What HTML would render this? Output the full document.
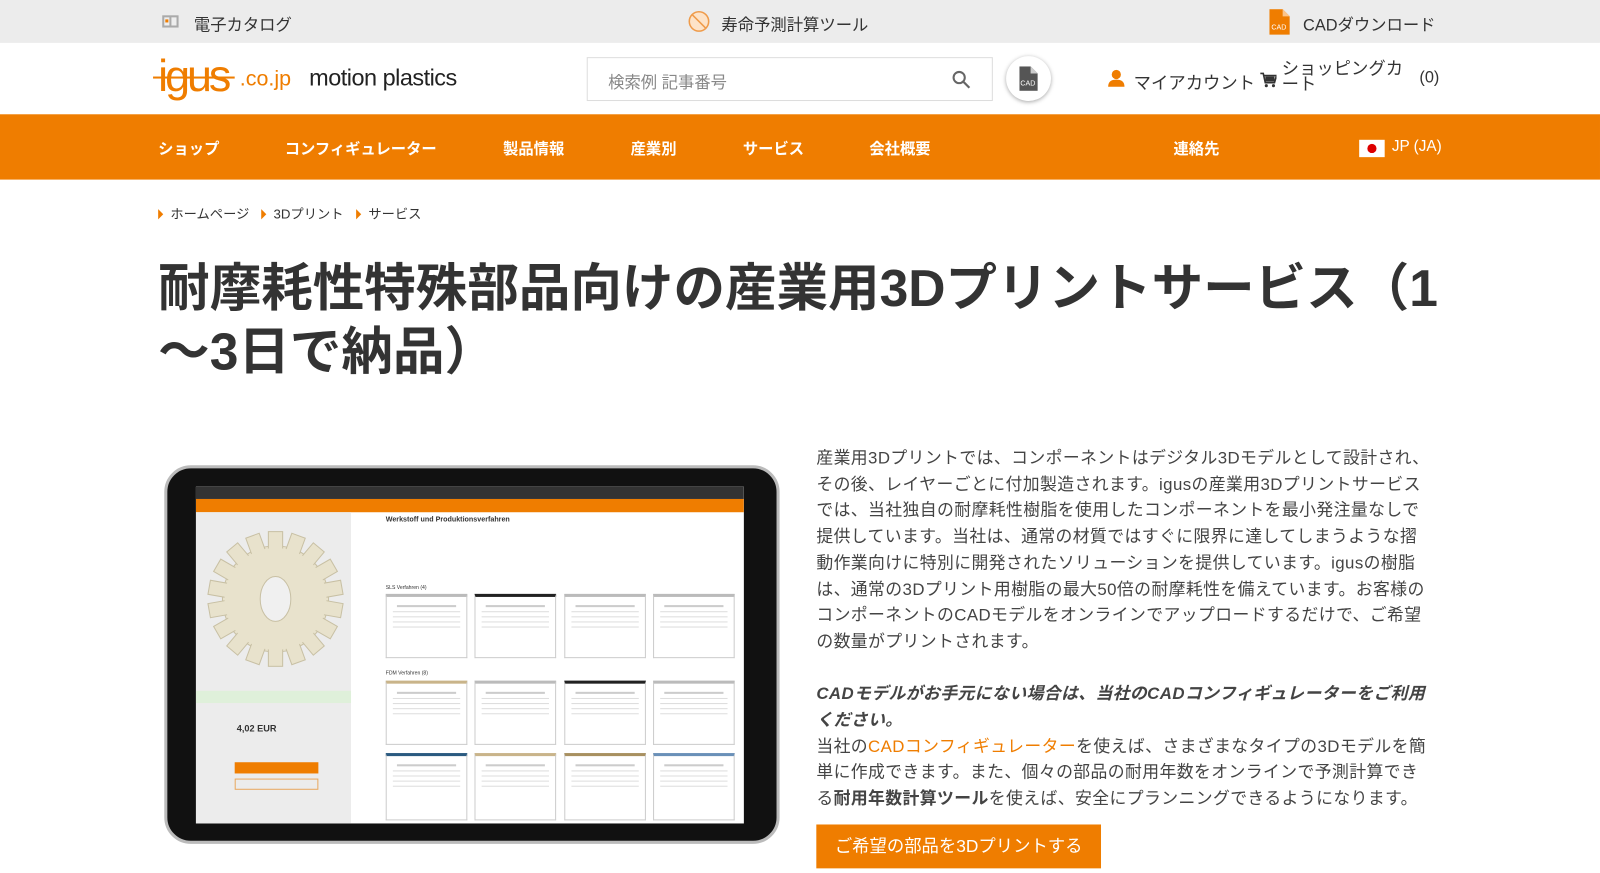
<!DOCTYPE html>
<html><head><meta charset="utf-8">
<style>
*{margin:0;padding:0;box-sizing:border-box}
body{width:1600px;height:873px;overflow:hidden;background:#fff;font-family:"Liberation Sans","Noto Sans CJK JP",sans-serif;color:#333}
#w{width:1568px;height:856px;position:relative;transform:scale(1.0204);transform-origin:0 0}
.top{height:42px;background:#ececec;position:relative;font-size:16px;color:#333}
.top span{position:absolute;top:11px}
.hdr{height:70px;position:relative}
.nav{height:64px;background:#ef7d00;position:relative;color:#fff;font-size:15px;font-weight:bold}
.nav span{position:absolute;top:23px}
.abs{position:absolute}
.bc{position:absolute;top:199px;font-size:13px;color:#333}
.bc i{display:inline-block;width:0;height:0;border-left:5px solid #ef7d00;border-top:5px solid transparent;border-bottom:5px solid transparent;margin-right:7px;vertical-align:-1px}
h1{position:absolute;left:155px;top:252px;width:1300px;font-size:50.5px;line-height:62px;font-weight:bold;color:#333;letter-spacing:0}
.txt{position:absolute;left:800px;top:437px;width:640px;font-size:16.5px;line-height:25.7px;color:#444;white-space:nowrap;letter-spacing:0.4px}
.btn{position:absolute;left:800px;top:808px;width:279px;height:43px;background:#ef7d00;color:#fff;font-size:17px;line-height:43px;text-align:center}
.card{position:absolute;background:#fff;border:1px solid #ccc;border-top:3px solid #bbb}
.card b{display:block;height:2px;background:#ccc;margin:8px 10px 4px}
.card u{display:block;height:1px;background:#ddd;margin:4px 6px;text-decoration:none}
</style></head><body><div id="w">
<div class="top">
 <svg class="abs" style="left:158px;top:13px" width="18" height="16"><rect x="1" y="2" width="16" height="12" fill="#aaa"/><rect x="3" y="4" width="5" height="8" fill="#eee"/><rect x="10" y="4" width="5" height="8" fill="#eee"/><rect x="4" y="6" width="3" height="3" fill="#ef7d00"/></svg>
 <span style="left:190px">電子カタログ</span>
 <svg class="abs" style="left:674px;top:10px" width="22" height="22"><circle cx="11" cy="11" r="9.5" fill="#fde3c8" stroke="#ef9b4a" stroke-width="1.5"/><line x1="4" y1="4" x2="18" y2="18" stroke="#ef9b4a" stroke-width="1.5"/></svg>
 <span style="left:707px">寿命予測計算ツール</span>
 <svg class="abs" style="left:1244px;top:9px" width="20" height="25"><path d="M0 0h13l7 7v18H0z" fill="#ef7d00"/><path d="M13 0v7h7" fill="#fbc48a"/><text x="2" y="20" font-size="7" fill="#fff" font-family="Liberation Sans">CAD</text></svg>
 <span style="left:1277px">CADダウンロード</span>
</div>
<div class="hdr">
 <div class="abs" style="left:155px;top:8px;font-size:44px;color:#ef7d00;letter-spacing:-3px;font-family:'Liberation Sans',sans-serif">igus</div>
 <div class="abs" style="left:150px;top:33px;width:80px;height:2px;background:#ef7d00"></div>
 <div class="abs" style="left:235px;top:24px;font-size:21px;color:#ef7d00">.co.jp</div>
 <div class="abs" style="left:303px;top:21px;font-size:23px;color:#222;letter-spacing:-0.5px">motion plastics</div>
 <div class="abs" style="left:575px;top:14px;width:398px;height:43px;border:1px solid #ddd"></div>
 <div class="abs" style="left:596px;top:25px;font-size:16px;color:#888">検索例 記事番号</div>
 <svg class="abs" style="left:932px;top:26px" width="20" height="20"><circle cx="8" cy="8" r="5.5" fill="none" stroke="#666" stroke-width="2"/><line x1="12" y1="12" x2="18" y2="18" stroke="#666" stroke-width="2.2"/></svg>
 <div class="abs" style="left:986px;top:13px;width:44px;height:44px;border-radius:50%;background:#fff;box-shadow:0 1px 4px rgba(0,0,0,.35)"></div>
 <svg class="abs" style="left:999px;top:23px" width="18" height="24"><path d="M0 0h11l7 7v17H0z" fill="#555"/><path d="M11 0v7h7" fill="#ccc"/><text x="1" y="19" font-size="7" fill="#fff" font-family="Liberation Sans">CAD</text></svg>
 <svg class="abs" style="left:1085px;top:26px" width="18" height="18"><circle cx="9" cy="5" r="4.5" fill="#ef7d00"/><path d="M1 17c0-5 3-7 8-7s8 2 8 7z" fill="#ef7d00"/></svg>
 <div class="abs" style="left:1111px;top:25px;font-size:17px;color:#333">マイアカウント</div>
 <svg class="abs" style="left:1235px;top:29px" width="16" height="16"><path d="M0 1h3l2 9h9l2-7H4" fill="none" stroke="#333" stroke-width="1.6"/><rect x="5" y="4" width="9" height="5" fill="#333"/><circle cx="6" cy="13" r="1.5" fill="#333"/><circle cx="13" cy="13" r="1.5" fill="#333"/></svg>
 <div class="abs" style="left:1256px;top:18px;font-size:17px;line-height:15px;color:#333;width:125px">ショッピングカ<br>ート</div>
 <div class="abs" style="left:1391px;top:26px;font-size:16px;color:#333">(0)</div>
</div>
<div class="nav">
 <span style="left:155px">ショップ</span><span style="left:279px">コンフィギュレーター</span><span style="left:493px">製品情報</span><span style="left:618px">産業別</span><span style="left:728px">サービス</span><span style="left:852px">会社概要</span><span style="left:1150px">連絡先</span>
 <div class="abs" style="left:1332px;top:25px;width:25px;height:17px;background:#fff"><div style="width:9px;height:9px;border-radius:50%;background:#d00;margin:4px 8px"></div></div>
 <span style="left:1364px;font-weight:normal">JP (JA)</span>
</div>
<div class="bc" style="left:155px"><i></i>ホームページ</div>
<div class="bc" style="left:256px"><i></i>3Dプリント</div>
<div class="bc" style="left:349px"><i></i>サービス</div>
<h1>耐摩耗性特殊部品向けの産業用3Dプリントサービス（1<br>～3日で納品）</h1>

<div class="abs" style="left:161px;top:456px;width:603px;height:371px;background:#111;border-radius:26px;border:3px solid #bbb"></div>
<div class="abs" style="left:192px;top:477px;width:537px;height:330px;background:#fff;overflow:hidden">
 <div style="height:12px;background:#333"></div>
 <div style="height:13px;background:#ef7d00"></div>
 <div class="abs" style="left:0;top:25px;width:152px;height:305px;background:#ececec"></div>
 <svg class="abs" style="left:8px;top:40px" width="140" height="140"><g transform="translate(70,70)" fill="#e8e2cc" stroke="#c8c0a4"><circle r="52"/><g id="t"><rect x="-7" y="-66" width="14" height="18"/></g>
 <use href="#t" transform="rotate(20)"/><use href="#t" transform="rotate(40)"/><use href="#t" transform="rotate(60)"/><use href="#t" transform="rotate(80)"/><use href="#t" transform="rotate(100)"/><use href="#t" transform="rotate(120)"/><use href="#t" transform="rotate(140)"/><use href="#t" transform="rotate(160)"/><use href="#t" transform="rotate(180)"/><use href="#t" transform="rotate(200)"/><use href="#t" transform="rotate(220)"/><use href="#t" transform="rotate(240)"/><use href="#t" transform="rotate(260)"/><use href="#t" transform="rotate(280)"/><use href="#t" transform="rotate(300)"/><use href="#t" transform="rotate(320)"/><use href="#t" transform="rotate(340)"/><circle r="50" stroke="none"/><ellipse rx="15" ry="22" fill="#f0f0f0"/></g></svg>
 <div class="abs" style="left:0;top:200px;width:152px;height:12px;background:#dff0da"></div>
 <div class="abs" style="left:40px;top:232px;font-size:9px;font-weight:bold;color:#333">4,02 EUR</div>
 <div class="abs" style="left:38px;top:270px;width:82px;height:11px;background:#ef7d00"></div>
 <div class="abs" style="left:38px;top:286px;width:82px;height:11px;border:1px solid #e8a860"></div>
 <div class="abs" style="left:186px;top:29px;font-size:7px;font-weight:bold;color:#333">Werkstoff und Produktionsverfahren</div>
 <div class="abs" style="left:186px;top:96px;font-size:5px;color:#333">SLS Verfahren (4)</div>
 <div class="abs" style="left:186px;top:180px;font-size:5px;color:#333">FDM Verfahren (8)</div>
 <div class="card" style="left:186px;top:105px;width:80px;height:63px"><b></b><u></u><u></u><u></u><u></u></div>
 <div class="card" style="left:273px;top:105px;width:80px;height:63px;border-top-color:#222"><b></b><u></u><u></u><u></u><u></u></div>
 <div class="card" style="left:361px;top:105px;width:80px;height:63px"><b></b><u></u><u></u><u></u><u></u></div>
 <div class="card" style="left:448px;top:105px;width:80px;height:63px"><b></b><u></u><u></u><u></u><u></u></div>
 <div class="card" style="left:186px;top:190px;width:80px;height:63px;border-top-color:#c9b48a"><b></b><u></u><u></u><u></u><u></u></div>
 <div class="card" style="left:273px;top:190px;width:80px;height:63px"><b></b><u></u><u></u><u></u><u></u></div>
 <div class="card" style="left:361px;top:190px;width:80px;height:63px;border-top-color:#222"><b></b><u></u><u></u><u></u><u></u></div>
 <div class="card" style="left:448px;top:190px;width:80px;height:63px"><b></b><u></u><u></u><u></u><u></u></div>
 <div class="card" style="left:186px;top:261px;width:80px;height:66px;border-top-color:#2a5a80"><b></b><u></u><u></u><u></u><u></u></div>
 <div class="card" style="left:273px;top:261px;width:80px;height:66px;border-top-color:#c9b48a"><b></b><u></u><u></u><u></u><u></u></div>
 <div class="card" style="left:361px;top:261px;width:80px;height:66px;border-top-color:#a89060"><b></b><u></u><u></u><u></u><u></u></div>
 <div class="card" style="left:448px;top:261px;width:80px;height:66px;border-top-color:#6a90b8"><b></b><u></u><u></u><u></u><u></u></div>
</div>

<div class="txt">産業用3Dプリントでは、コンポーネントはデジタル3Dモデルとして設計され、<br>その後、レイヤーごとに付加製造されます。igusの産業用3Dプリントサービス<br>では、当社独自の耐摩耗性樹脂を使用したコンポーネントを最小発注量なしで<br>提供しています。当社は、通常の材質ではすぐに限界に達してしまうような摺<br>動作業向けに特別に開発されたソリューションを提供しています。igusの樹脂<br>は、通常の3Dプリント用樹脂の最大50倍の耐摩耗性を備えています。お客様の<br>コンポーネントのCADモデルをオンラインでアップロードするだけで、ご希望<br>の数量がプリントされます。<br><br style="line-height:10px">
<b><i>CADモデルがお手元にない場合は、当社のCADコンフィギュレーターをご利用<br>ください。</i></b><br>当社の<span style="color:#ef7d00">CADコンフィギュレーター</span>を使えば、さまざまなタイプの3Dモデルを簡<br>単に作成できます。また、個々の部品の耐用年数をオンラインで予測計算でき<br>る<b>耐用年数計算ツール</b>を使えば、安全にプランニングできるようになります。</div>
<div class="btn">ご希望の部品を3Dプリントする</div>
</div></body></html>
